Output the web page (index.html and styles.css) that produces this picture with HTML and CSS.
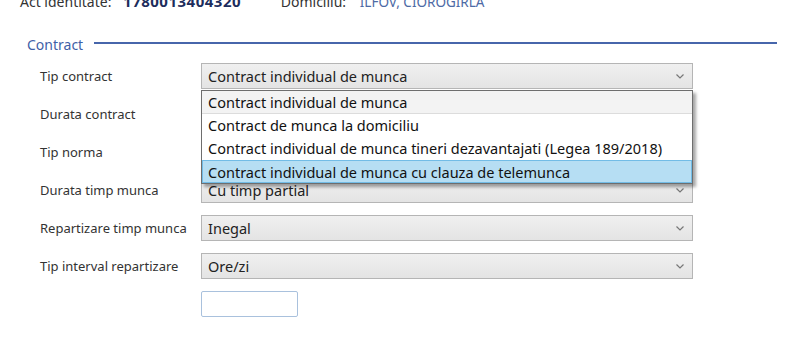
FILE: index.html
```html
<!DOCTYPE html>
<html>
<head>
  <title>Contract</title>
  <link rel="stylesheet" href="styles.css">
</head>
<body>
  <div class="top-strip">
    <div class="top-row">
      <span class="top-label">Act identitate:</span>
      <span class="top-value">1780013404320</span>
      <span class="top-label dom">Domiciliu:</span>
      <span class="top-place">ILFOV, CIOROGIRLA</span>
    </div>
  </div>

  <div class="section-head">
    <span class="legend">Contract</span>
    <span class="legend-line"></span>
  </div>

  <div class="form">
    <div class="row">
      <label>Tip contract</label>
      <div class="select-wrap">
        <div class="select">
          <span>Contract individual de munca</span>
          <svg class="chev" width="8" height="5" viewBox="0 0 8 5"><path d="M0.5 0.5 L4 4 L7.5 0.5" fill="none" stroke="#777" stroke-width="1.2"/></svg>
        </div>
        <!-- open dropdown list -->
        <ul class="options">
          <li class="first">Contract individual de munca</li>
          <li>Contract de munca la domiciliu</li>
          <li>Contract individual de munca tineri dezavantajati (Legea 189/2018)</li>
          <li class="active">Contract individual de munca cu clauza de telemunca</li>
        </ul>
      </div>
    </div>
    <div class="row">
      <label>Durata contract</label>
      <div class="select"><span></span>
        <svg class="chev" width="8" height="5" viewBox="0 0 8 5"><path d="M0.5 0.5 L4 4 L7.5 0.5" fill="none" stroke="#777" stroke-width="1.2"/></svg>
      </div>
    </div>
    <div class="row">
      <label>Tip norma</label>
      <div class="select"><span></span>
        <svg class="chev" width="8" height="5" viewBox="0 0 8 5"><path d="M0.5 0.5 L4 4 L7.5 0.5" fill="none" stroke="#777" stroke-width="1.2"/></svg>
      </div>
    </div>
    <div class="row">
      <label>Durata timp munca</label>
      <div class="select"><span>Cu timp partial</span>
        <svg class="chev" width="8" height="5" viewBox="0 0 8 5"><path d="M0.5 0.5 L4 4 L7.5 0.5" fill="none" stroke="#777" stroke-width="1.2"/></svg>
      </div>
    </div>
    <div class="row">
      <label>Repartizare timp munca</label>
      <div class="select"><span>Inegal</span>
        <svg class="chev" width="8" height="5" viewBox="0 0 8 5"><path d="M0.5 0.5 L4 4 L7.5 0.5" fill="none" stroke="#777" stroke-width="1.2"/></svg>
      </div>
    </div>
    <div class="row">
      <label>Tip interval repartizare</label>
      <div class="select"><span>Ore/zi</span>
        <svg class="chev" width="8" height="5" viewBox="0 0 8 5"><path d="M0.5 0.5 L4 4 L7.5 0.5" fill="none" stroke="#777" stroke-width="1.2"/></svg>
      </div>
    </div>
    <div class="row">
      <label></label>
      <div class="textbox"></div>
    </div>
  </div>
</body>
</html>
```

FILE: styles.css
```css
body {
  margin: 0;
  padding: 0;
  font-family: "Noto Sans", "Open Sans", sans-serif;
  color: #333;
  background: #fff;
  overflow: hidden;
}

.top-strip {
  height: 12px;
  overflow: hidden;
}

.top-row {
  margin-top: -9px;
  padding-left: 20px;
  font-size: 14px;
  line-height: 20px;
  white-space: nowrap;
}

.top-label {
  color: #333;
}

.top-value {
  margin-left: 8px;
  font-weight: bold;
  color: #1d2d5c;
  font-size: 15px;
  letter-spacing: 0.5px;
}

.top-label.dom {
  margin-left: 36px;
}

.top-place {
  margin-left: 10px;
  color: #4d6aa5;
  font-size: 13.5px;
}

.section-head {
  display: flex;
  align-items: center;
  margin-top: 24px;
  padding-left: 27px;
  padding-right: 32px;
  height: 16px;
}

.legend {
  font-size: 14px;
  color: #3f5fa7;
  margin-right: 11px;
}

.legend-line {
  flex: 1;
  height: 2px;
  background: #4766ab;
  margin-top: -3px;
}

.form {
  margin-top: 11px;
  display: flex;
  flex-direction: column;
  gap: 12px;
}

.row {
  display: flex;
  align-items: center;
  height: 26px;
}

.row label {
  flex: none;
  width: 201px;
  padding-left: 40px;
  box-sizing: border-box;
  font-size: 13px;
  color: #333;
  white-space: nowrap;
}

.select-wrap {
  position: relative;
}

.select {
  width: 492px;
  height: 26px;
  box-sizing: border-box;
  border: 1px solid #b5b5b5;
  background: linear-gradient(#f0f0f0, #e4e4e4);
  display: flex;
  align-items: center;
  justify-content: space-between;
  padding: 0 8px 0 6px;
  font-size: 14.5px;
  color: #222;
}

.chev {
  margin-top: 1px;
}

.options {
  position: absolute;
  left: 0;
  top: 27px;
  width: 492px;
  box-sizing: border-box;
  margin: 0;
  padding: 0;
  list-style: none;
  background: #fff;
  border: 1px solid #6e6e6e;
  box-shadow: 3px 3px 3px rgba(0, 0, 0, 0.35);
  z-index: 5;
  font-size: 14.5px;
  color: #111;
}

.options li {
  height: 23px;
  line-height: 22px;
  padding-left: 6px;
  box-sizing: border-box;
  white-space: nowrap;
}

.options li.first {
  background: #f3f3f3;
  border-bottom: 1px solid #dcdcdc;
}

.options li.active {
  background: #b6def3;
  border: 1px solid #72bce6;
  padding-left: 5px;
}

.textbox {
  width: 97px;
  height: 26px;
  box-sizing: border-box;
  border: 1px solid #a9c1dd;
  border-radius: 2px;
  background: #fff;
}
```
